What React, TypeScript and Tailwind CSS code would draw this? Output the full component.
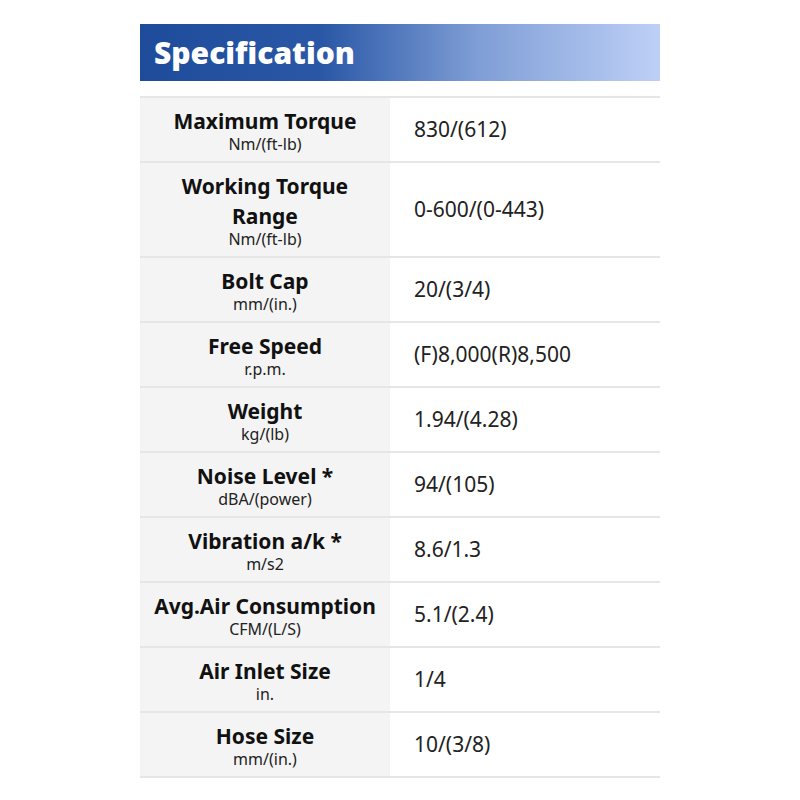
const rows = [
  { label: ["Maximum Torque"], unit: "Nm/(ft-lb)", value: "830/(612)" },
  { label: ["Working Torque", "Range"], unit: "Nm/(ft-lb)", value: "0-600/(0-443)" },
  { label: ["Bolt Cap"], unit: "mm/(in.)", value: "20/(3/4)" },
  { label: ["Free Speed"], unit: "r.p.m.", value: "(F)8,000(R)8,500" },
  { label: ["Weight"], unit: "kg/(lb)", value: "1.94/(4.28)" },
  { label: ["Noise Level *"], unit: "dBA/(power)", value: "94/(105)" },
  { label: ["Vibration a/k *"], unit: "m/s2", value: "8.6/1.3" },
  { label: ["Avg.Air Consumption"], unit: "CFM/(L/S)", value: "5.1/(2.4)" },
  { label: ["Air Inlet Size"], unit: "in.", value: "1/4" },
  { label: ["Hose Size"], unit: "mm/(in.)", value: "10/(3/8)" },
];

export default function App() {
  return (
    <div className="w-[800px] h-[800px] bg-white pt-6 pl-[140px] font-['Noto_Sans',sans-serif]">
      <div className="w-[520px]">
        <div className="h-[57px] flex items-center pl-[14px] bg-[linear-gradient(90deg,#1e4c9a_0%,#2a58a6_35%,#7f9ed6_65%,#bed0f6_100%)]">
          <h2 className="text-white text-[30px] font-extrabold font-['Open_Sans',sans-serif] leading-none">
            Specification
          </h2>
        </div>
        <div className="mt-[15px] border-t-2 border-[#e6e6e6]">
          {rows.map((r) => (
            <div key={r.value} className="flex border-b-2 border-[#e6e6e6]">
              <div className="w-[250px] bg-[#f4f4f4] flex flex-col items-center justify-center text-center py-[8px]">
                {r.label.map((l) => (
                  <div key={l} className="text-[21px] font-bold text-[#111] leading-[30px]">
                    {l}
                  </div>
                ))}
                <div className="text-[16px] text-[#222] leading-[17px]">{r.unit}</div>
              </div>
              <div className="flex-1 flex items-center pl-6 text-[21px] text-[#222]">{r.value}</div>
            </div>
          ))}
        </div>
      </div>
    </div>
  );
}
